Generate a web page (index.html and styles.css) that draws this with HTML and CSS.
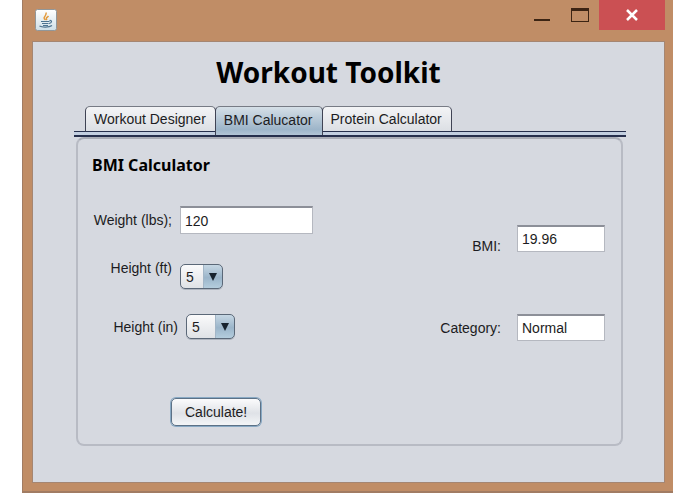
FILE: index.html
```
<!DOCTYPE html>
<html lang="en">
<head>
  <meta charset="UTF-8">
  <meta name="viewport" content="width=device-width, initial-scale=1.0">
  <title>Workout Toolkit</title>
  <link rel="stylesheet" href="styles.css">
</head>
<body>
  <div class="window">
    <header class="titlebar">
      <svg class="app-icon" width="22" height="22" viewBox="0 0 22 22" aria-hidden="true">
        <defs>
          <linearGradient id="icon-bg" x1="0" y1="0" x2="0" y2="1">
            <stop offset="0" stop-color="#ffffff"/>
            <stop offset="1" stop-color="#cfdfe8"/>
          </linearGradient>
        </defs>
        <rect x="0.5" y="0.5" width="21" height="21" rx="2" fill="url(#icon-bg)" stroke="#91979a"/>
        <path d="M10.500 11C6.500 8 12.500 7 11 3.500M12 11C10 9 12.500 8.500 13.500 7" fill="none" stroke="#e39a3c" stroke-width="1.500"/>
        <path d="M6 12.500H14.500M7 14.500H13.500M14.500 11.500C17.500 11 17 14 14 14.500M4.500 17C7 18.500 14 18.500 17 16.500M8 16.500H13" fill="none" stroke="#4d7390" stroke-width="1.200"/>
      </svg>
      <div class="window-controls">
        <button type="button" class="control minimize" aria-label="Minimize">
          <svg width="18" height="16" viewBox="0 0 18 16"><path d="M1 13H17" stroke="#3c2413" stroke-width="2"/></svg>
        </button>
        <button type="button" class="control maximize" aria-label="Maximize">
          <svg width="18" height="16" viewBox="0 0 18 16"><path d="M0 2.500H18" stroke="#3c2413" stroke-width="3"/><rect x="0.500" y="1.500" width="17" height="13" fill="none" stroke="#3c2413"/></svg>
        </button>
        <button type="button" class="control close" aria-label="Close">
          <svg width="14" height="12" viewBox="0 0 14 12"><path d="M2 1L12 11M12 1L2 11" stroke="#ffffff" stroke-width="2.500"/></svg>
        </button>
      </div>
    </header>

    <main class="content">
      <h1>Workout Toolkit</h1>

      <div class="tabs" role="tablist">
        <button type="button" class="tab" role="tab">Workout Designer</button>
        <button type="button" class="tab active" role="tab" aria-selected="true">BMI Calucator</button>
        <button type="button" class="tab" role="tab">Protein Calculator</button>
      </div>

      <form class="panel">
        <h2>BMI Calculator</h2>
        <div class="columns">
          <div class="inputs">
            <div class="row">
              <label for="weight">Weight (lbs);</label>
              <input type="text" class="weight" id="weight" value="120">
            </div>
            <div class="row top">
              <label for="feet">Height (ft)</label>
              <select class="feet" id="feet">
                <option>4</option>
                <option selected>5</option>
                <option>6</option>
                <option>7</option>
              </select>
            </div>
            <div class="row">
              <label for="inches" class="wide">Height (in)</label>
              <select class="inches" id="inches">
                <option>4</option>
                <option selected>5</option>
                <option>6</option>
                <option>7</option>
              </select>
            </div>
          </div>
          <div class="results">
            <div class="row bmi">
              <label for="bmi">BMI:</label>
              <input type="text" id="bmi" value="19.96">
            </div>
            <div class="row">
              <label for="category">Category:</label>
              <input type="text" id="category" value="Normal">
            </div>
          </div>
        </div>
        <button type="button" class="calculate">Calculate!</button>
      </form>
    </main>
  </div>
</body>
</html>
```
FILE: styles.css
```
* {
  box-sizing: border-box;
}
body {
  margin: 0 22px;
  background-color: #ffffff;
  color: #1c1c22;
  font-family: "Liberation Sans", Arial, sans-serif;
  font-size: 14px;
  line-height: 18px;
}
button, input, select {
  font: inherit;
  color: inherit;
}

/* Window frame */
.window {
  padding: 0 8px 8px 9px;
  background-color: #c08d66;
  border: 1px solid #a17c63;
  border-top: 0;
  border-right: 0;
  border-bottom-width: 2px;
}
.titlebar {
  display: flex;
  justify-content: space-between;
  align-items: flex-start;
  height: 41px;
  padding-left: 3px;
}
.app-icon {
  margin-top: 9px;
}
.window-controls {
  display: flex;
}
.control {
  display: flex;
  align-items: center;
  justify-content: center;
  width: 38px;
  height: 30px;
  padding: 0;
  border: 0;
  background: none;
}
.close {
  width: 66px;
  background-color: #cb5053;
}

.content {
  padding: 12px 41px 36px 43px;
  background-color: #d6d9e0;
  border: 1px solid #a58672;
}
h1 {
  margin: 0 0 16px;
  padding-right: 42px;
  color: #000000;
  font-family: "Noto Sans", Tahoma, sans-serif;
  font-size: 28px;
  line-height: 36px;
  text-align: center;
}

/* Tabs */
.tabs {
  display: flex;
  margin: 0 -3px 0 -2px;
  padding-left: 11px;
  background: linear-gradient(#262f4c, #262f4c) 0 25px / 100% 1px no-repeat,
    linear-gradient(#c3cfe0, #c3cfe0) 0 26px / 100% 3px no-repeat;
  border-bottom: 2px solid #262f4c;
}
.tab {
  height: 26px;
  margin: 0 0 3px -1px;
  padding: 0 9px 0 8px;
  border: 1px solid #3f4354;
  border-top-color: #777b85;
  border-bottom-color: #262f4c;
  border-radius: 5px 5px 0 0;
  background: linear-gradient(#f3f4f6, #dcdfe4);
}
.tab:first-child {
  margin-left: 0;
}
.tab.active {
  height: 29px;
  margin-bottom: 0;
  border-bottom: 0;
  padding-bottom: 2px;
  background: linear-gradient(#d5dfe7, #9db5c9 80%, #b3c5d6);
}

.panel {
  padding: 17px 16px 18px 14px;
  border: 2px solid #b8bbc4;
  border-top-color: #a9acb5;
  border-radius: 8px;
}
h2 {
  margin: 0 0 32px;
  color: #000000;
  font-family: "Noto Sans", Tahoma, sans-serif;
  font-size: 16px;
  line-height: 18px;
}

/* Form */
.columns {
  display: flex;
  justify-content: space-between;
}
.inputs, .results {
  display: flex;
  flex-direction: column;
}
.inputs {
  gap: 25px;
}
.results {
  align-items: flex-end;
  gap: 59px;
  padding-top: 19px;
}
.row {
  display: flex;
  align-items: center;
  gap: 8px;
}
.row label {
  width: 80px;
  text-align: right;
}
.row label.wide {
  width: 86px;
}
.results .row {
  gap: 16px;
}
.row.top {
  align-items: flex-start;
}
.row.top select {
  margin-top: 5px;
}
.row.bmi {
  align-items: flex-end;
}
.row.bmi input {
  margin-bottom: 3px;
}
input {
  width: 88px;
  height: 27px;
  padding: 0 4px;
  border: 1px solid #b5b8c0;
  border-top: 2px solid #8c8f98;
  background-color: #ffffff;
}
.weight {
  width: 133px;
  height: 28px;
}
select {
  height: 25px;
  padding: 0 5px;
  appearance: none;
  border: 1px solid #5b6878;
  border-radius: 5px;
  background:
    url("data:image/svg+xml,%3Csvg xmlns='http://www.w3.org/2000/svg' width='8' height='8'%3E%3Cpath d='M0 0H8L4 8Z' fill='%2317232f'/%3E%3C/svg%3E") right 5px center no-repeat,
    linear-gradient(#a3b6c7, #a3b6c7) right 18px top / 1px 100% no-repeat,
    linear-gradient(#c6d7e4, #9bb5ca 55%, #b4cddd) right / 18px 100% no-repeat,
    linear-gradient(#fafafb, #dfe2e6);
  box-shadow: 0 1px 0 #aeb4be;
}
.feet {
  width: 43px;
}
.inches {
  width: 49px;
}
.calculate {
  display: block;
  height: 28px;
  margin: 57px 0 0 79px;
  padding: 0 13px;
  border: 1px solid #5c7186;
  border-radius: 5px;
  background: linear-gradient(#fbfbfc, #dfe2e7 55%, #f3f5f7);
  box-shadow: 0 0 0 1px #88a9c4;
}
```
